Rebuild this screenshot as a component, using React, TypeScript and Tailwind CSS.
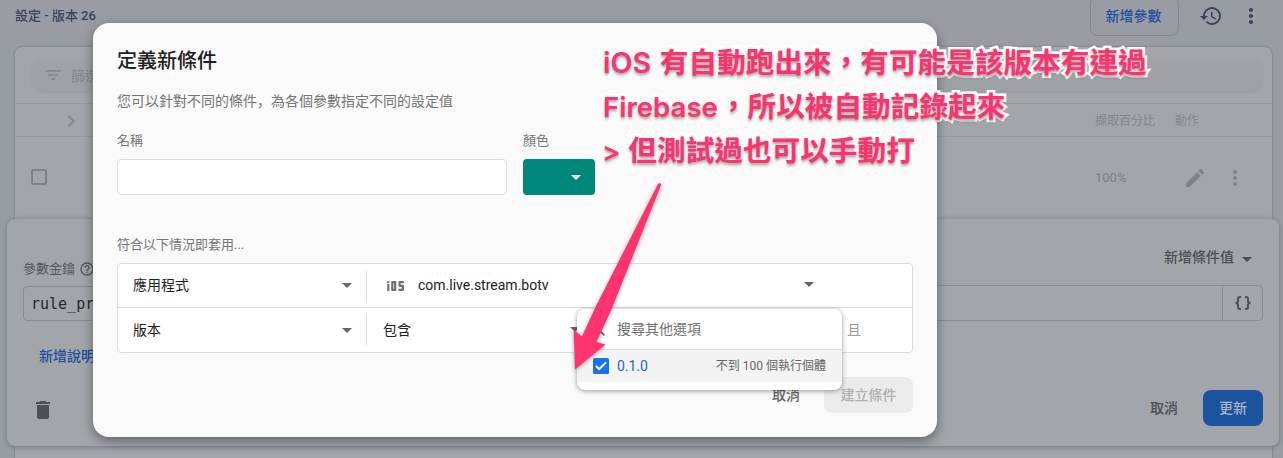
import React from "react";

const cjk = "font-[Roboto,'Noto_Sans_CJK_TC',sans-serif]";

function Caret({ className = "" }: { className?: string }) {
  return (
    <svg className={className} width="10" height="5" viewBox="0 0 10 5" fill="currentColor">
      <path d="M0 0h10L5 5z" />
    </svg>
  );
}

function Dots() {
  return (
    <svg width="24" height="24" viewBox="0 0 24 24" fill="currentColor">
      <path d="M12 8c1.1 0 2-.9 2-2s-.9-2-2-2-2 .9-2 2 .9 2 2 2zm0 2c-1.1 0-2 .9-2 2s.9 2 2 2 2-.9 2-2-.9-2-2-2zm0 6c-1.1 0-2 .9-2 2s.9 2 2 2 2-.9 2-2-.9-2-2-2z" />
    </svg>
  );
}

function TopBar() {
  return (
    <header className="flex h-[47px] items-start">
      <h1 className="ml-[15px] mt-[6px] text-[13px] leading-5 font-medium text-[#36435a]">設定 - 版本 26</h1>
      <button className="-mt-1 ml-auto h-10 w-[89px] rounded-lg border border-[#84888f] pr-[2px] text-[14px] font-medium text-[#1c4f9c]">
        新增參數
      </button>
      <div className="mt-1 mr-5 ml-5 flex gap-4 text-[#36435a]">
        <svg width="24" height="24" viewBox="0 0 24 24" fill="currentColor">
          <path d="M13 3a9 9 0 0 0-9 9H1l3.89 3.89.07.14L9 12H6c0-3.87 3.13-7 7-7s7 3.13 7 7-3.13 7-7 7c-1.93 0-3.68-.79-4.94-2.06l-1.42 1.42A8.954 8.954 0 0 0 13 21a9 9 0 0 0 0-18zm-1 5v5l4.28 2.54.72-1.21-3.5-2.08V8H12z" />
        </svg>
        <Dots />
      </div>
    </header>
  );
}

function ParameterTable() {
  return (
    <section className="ml-[15px] h-[411px] w-[1257px] rounded-t-lg bg-[#a2a5aa] text-[12px] text-[#84878c] shadow-[0_0_2px_1px_#82868d]">
      <div className="flex h-[57px] items-center border-b border-[#979a9f] pr-2 pl-4">
        <div className="flex h-9 w-full items-center gap-2 rounded-xl bg-gradient-to-b from-[#a0a3a8] to-[#9c9fa4] px-3">
          <svg width="20" height="20" viewBox="0 0 24 24" fill="currentColor">
            <path d="M10 18h4v-2h-4v2zM3 6v2h18V6H3zm3 7h12v-2H6v2z" />
          </svg>
          <span className="pt-[2px] text-[14px]">篩選條件</span>
        </div>
      </div>
      <div className="flex h-[33px] items-center border-b border-[#979a9f] pt-[2px]">
        <svg className="ml-[44px]" width="24" height="24" viewBox="0 0 24 24" fill="currentColor">
          <path d="M10 6 8.6 7.4 13.2 12l-4.6 4.6L10 18l6-6z" />
        </svg>
        <span className="ml-auto w-20">擷取百分比</span>
        <span className="w-[97px]">動作</span>
      </div>
      <div className="flex h-20 items-center">
        <span className="ml-4 size-4 rounded-[2px] border-2 border-[#7f8287]" />
        <span className="ml-auto w-[88px] pt-[1px] text-[13px] text-[#7c7f84]">100%</span>
        <svg className="mt-[2px] text-[#7f8287]" width="24" height="24" viewBox="0 0 24 24" fill="currentColor">
          <path d="M3 17.25V21h3.75L17.81 9.94l-3.75-3.75L3 17.25zM20.71 7.04a1 1 0 0 0 0-1.41l-2.34-2.34a1 1 0 0 0-1.41 0l-1.83 1.83 3.75 3.75 1.83-1.83z" />
        </svg>
        <span className="mt-[2px] mr-[25px] ml-4 text-[#7f8287]">
          <Dots />
        </span>
      </div>
    </section>
  );
}

function ParameterEditor() {
  return (
    <section className="absolute left-[7px] top-[219px] flex h-[227px] w-[1272px] flex-col rounded-lg bg-[#a2a5aa] px-4 text-[#4c4f54] shadow-[0_1px_4px_1px_#7c8087]">
      <div className="flex h-[66px] pt-[37px]">
        <div className="flex h-6 items-center gap-1 pt-[1px] text-[13px] text-[#55585d]">
          參數金鑰
          <svg width="16" height="16" viewBox="0 0 24 24" fill="currentColor">
            <path d="M11 18h2v-2h-2v2zm1-16a10 10 0 1 0 0 20 10 10 0 0 0 0-20zm0 18a8 8 0 1 1 0-16 8 8 0 0 1 0 16zm0-14a4 4 0 0 0-4 4h2a2 2 0 1 1 4 0c0 2-3 1.75-3 5h2c0-2.25 3-2.5 3-5a4 4 0 0 0-4-4z" />
          </svg>
        </div>
        <div className="-mt-[6px] ml-auto flex h-[15px] items-center gap-2 pr-[11px] text-[14px] font-medium leading-[15px]">
          新增條件值
          <Caret className="mt-[3px]" />
        </div>
      </div>
      <div className="flex h-9 justify-between">
        <div className="mt-[1px] flex w-[300px] items-center rounded border border-[#898c91] pt-[2px] pl-[7px] font-['DejaVu_Sans_Mono',monospace] text-[15px] text-[#26282c]">rule_project</div>
        <div className="flex w-[640px] rounded border border-[#898c91]">
          <span className="ml-auto flex w-10 items-center justify-center border-l border-[#898c91]">
            <svg width="18" height="16" viewBox="0 0 18 16" fill="none" stroke="currentColor" strokeWidth="2">
              <path d="M7 2H6C4.5 2 4 2.8 4 4v2C4 7.300 3.200 8 1.500 8 3.200 8 4 8.700 4 10v2c0 1.200.5 2 2 2h1M11 2h1c1.500 0 2 .8 2 2v2c0 1.300.8 2 2.500 2-1.700 0-2.500.7-2.500 2v2c0 1.200-.5 2-2 2h-1" />
            </svg>
          </span>
        </div>
      </div>
      <div className="mt-[25px] ml-4 text-[14px] font-medium text-[#1c4f9c]">新增說明</div>
      <div className="mt-auto mb-5 flex h-9 items-center">
        <svg className="ml-2 mt-1" width="24" height="24" viewBox="0 0 24 24" fill="currentColor">
          <path d="M6 19c0 1.1.9 2 2 2h8c1.1 0 2-.9 2-2V7H6v12zM19 4h-3.5l-1-1h-5l-1 1H5v2h14V4z" />
        </svg>
        <span className="mr-[25px] ml-auto text-[14px] font-medium">取消</span>
        <button className="h-9 w-[60px] rounded-lg bg-[#1b539f] text-[14px] font-medium text-[#aab4c2]">更新</button>
      </div>
    </section>
  );
}

function ConditionRows() {
  return (
    <div className="mt-2 h-[90px] rounded border border-[#dcdcdc] bg-white text-[14px] text-[#212121]">
      <div className="flex h-11 items-center border-b border-[#dcdcdc]">
        <div className="flex h-8 w-[249px] items-center justify-between border-r border-[#dcdcdc] pr-[14px] pl-[15px]">
          應用程式
          <Caret className="text-[#666]" />
        </div>
        <svg className="ml-5" width="18" height="12" viewBox="0 0 18 12" fill="none" stroke="#6e6e6e" strokeWidth="2.2">
          <path d="M1.300 4v7M1.300 1v2M5.300 2.100h2.900v7.800H5.300zM16.800 2.100h-4.200v3.700h3.200v4.100h-4.300" strokeLinejoin="round" />
        </svg>
        <span className="ml-[13px]">com.live.stream.botv</span>
        <Caret className="mr-[98px] mb-[2px] ml-auto text-[#666]" />
      </div>
      <div className="flex h-11 items-center">
        <div className="flex h-8 w-[249px] items-center justify-between border-r border-[#dcdcdc] pr-[14px] pl-[15px]">
          版本
          <Caret className="text-[#666]" />
        </div>
        <span className="w-[203px] pl-4">包含</span>
        <Caret className="mb-[2px] text-[#666]" />
        <span className="mr-[51px] ml-auto text-[#9b9b9b]">且</span>
      </div>
    </div>
  );
}

function VersionMenu() {
  return (
    <div className="absolute left-[577px] top-[309px] flex h-[81px] w-[265px] flex-col rounded-lg bg-white shadow-[0_1px_5px_rgba(0,0,0,0.4)]">
      <div className="flex h-[41px] items-center border-b border-[#dedede] pl-[11px]">
        <svg width="20" height="20" viewBox="0 0 24 24" fill="#666">
          <path d="M15.5 14h-.79l-.28-.27A6.47 6.47 0 0 0 16 9.5 6.5 6.5 0 1 0 9.5 16c1.61 0 3.09-.59 4.23-1.57l.27.28v.79l5 4.99L20.49 19l-4.99-5zm-6 0a4.5 4.5 0 1 1 0-9 4.5 4.5 0 0 1 0 9z" />
        </svg>
        <span className="ml-[9px] text-[14px] text-[#727272]">搜尋其他選項</span>
      </div>
      <div className="flex h-8 items-center bg-[#f3f3f3] px-4">
        <svg width="16" height="16" viewBox="0 0 16 16">
          <rect width="16" height="16" rx="1.5" fill="#1a73e8" />
          <path d="m3 8 3.2 3.2L13 4.4" fill="none" stroke="#fff" strokeWidth="2" />
        </svg>
        <span className="ml-2 text-[14px] text-[#1967d2]">0.1.0</span>
        <span className="ml-auto text-[12px] text-[#666]">不到 100 個執行個體</span>
      </div>
    </div>
  );
}

function ConditionDialog() {
  return (
    <section className="absolute left-[93px] top-[23px] flex h-[414px] w-[844px] flex-col rounded-2xl bg-[#fafafa] px-6 pt-[23px] text-[13px] text-[#757575] shadow-[0_4px_12px_rgba(0,0,0,0.4)]">
      <h2 className="text-[20px] leading-[30px] font-medium text-[#212121]">定義新條件</h2>
      <p className="mt-[14px] text-[14px] leading-5">
        您可以針對不同的條件<span lang="ja" className="font-['Noto_Sans_CJK_JP',sans-serif]">，</span>為各個參數指定不同的設定值
      </p>
      <div className="mt-5 flex gap-4">
        <label className="leading-5">
          名稱
          <span className="mt-2 block h-9 w-[390px] rounded border border-[#dcdcdc] bg-white" />
        </label>
        <div className="leading-5">
          顏色
          <div className="mt-2 flex h-9 w-[72px] items-center justify-end rounded bg-[#00897b] pr-[14px] text-white">
            <Caret />
          </div>
        </div>
      </div>
      <p className="mt-10 leading-5">符合以下情況即套用...</p>
      <ConditionRows />
      <div className="mt-6 flex items-center justify-end text-[14px] font-medium">
        <span className="mr-6 text-[#666]">取消</span>
        <button className="h-9 w-[89px] rounded-lg bg-[#ebebeb] text-[#b0b0b0]">建立條件</button>
      </div>
    </section>
  );
}

const noteLines = [
  { latin: "iOS", latinClass: "mr-[2px] text-[28.6px]", text: " 有自動跑出來，有可能是該版本有連過" },
  { latin: "Firebase", latinClass: "mr-[1px] text-[27.6px]", text: "，所以被自動記錄起來" },
  { latin: ">", latinClass: "-ml-[1px] mr-[1px] text-[27.6px]", text: " 但測試過也可以手動打" },
];

function Annotation() {
  return (
    <>
      <svg className="absolute left-[560px] top-[170px] drop-shadow-[0_1px_2px_rgba(0,0,0,0.35)]" width="120" height="210" viewBox="0 0 120 210">
        <path d="M98 14c1-1.600 3.600-.8 3 1.200L52.500 137 36.500 172l9 2.500-30.500 25-1.300-40 8.300 7L35.700 136.700z" fill="#ff3370" />
      </svg>
      <div className="absolute left-[603px] top-[41px] text-[28.65px] leading-[44px] font-bold whitespace-nowrap text-[#fb3470] font-[Inter,'Noto_Sans_CJK_TC',sans-serif] [-webkit-text-stroke:5px_white] [paint-order:stroke_fill] [text-shadow:0_2px_3px_rgba(0,0,0,0.4)]">
        {noteLines.map(({ latin, latinClass, text }) => (
          <div key={latin}>
            <span className={`font-semibold ${latinClass}`}>{latin}</span>
            {text}
          </div>
        ))}
      </div>
    </>
  );
}

export default function App() {
  return (
    <main lang="zh-TW" className={`relative h-[458px] w-[1283px] overflow-hidden bg-[#999ca3] ${cjk}`}>
      <TopBar />
      <ParameterTable />
      <ParameterEditor />
      <ConditionDialog />
      <VersionMenu />
      <Annotation />
    </main>
  );
}
